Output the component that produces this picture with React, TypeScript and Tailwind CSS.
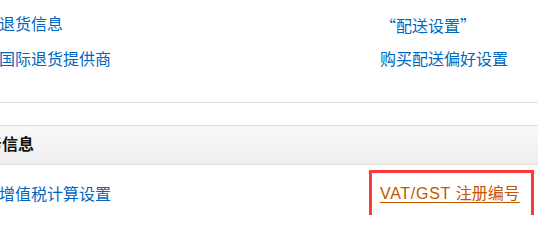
import React from 'react';

const linkCls = 'text-[#0066c0] hover:underline cursor-pointer';

export default function App() {
  return (
    <div className="w-[538px] h-[215px] overflow-hidden bg-white text-[16px] leading-[22px] font-['Liberation_Sans','Noto_Sans_CJK_SC',sans-serif]">
      {/* Return settings */}
      <div className="pt-[8px]">
        <div className="grid grid-cols-[380px_1fr] h-[34px] items-center">
          <span className={`${linkCls} -ml-[1px]`}>退货信息</span>
          <span className={`${linkCls} font-['Noto_Sans_CJK_SC',sans-serif]`}>“配送设置”</span>
        </div>
        <div className="grid grid-cols-[380px_1fr] h-[35px] items-center">
          <span className={`${linkCls} -ml-[1px]`}>国际退货提供商</span>
          <span className={linkCls}>购买配送偏好设置</span>
        </div>
      </div>
      <div className="mt-[25px] border-b border-[#dddddd]" />

      {/* Tax section header */}
      <div className="mt-[22px] h-[40px] border-y border-[#dcdcdc] bg-gradient-to-b from-[#f8f8f8] to-[#eeeeee] flex items-center overflow-hidden">
        <span className="-ml-[30px] font-bold text-[#111111] whitespace-nowrap">税务信息</span>
      </div>

      {/* Tax settings */}
      <div className="mt-[5px] grid grid-cols-[369px_165px]">
        <div className="flex items-center h-[50px]">
          <span className={`${linkCls} -ml-[1px]`}>增值税计算设置</span>
        </div>
        <div className="h-[60px] border-[3px] border-b-0 border-[#ff3a3a] pl-[8px] pt-[10px]">
          <span className="text-[#c45500] underline underline-offset-[3px] cursor-pointer whitespace-nowrap">
            <span className="tracking-[0.7px]">VAT/GST </span>注册编号
          </span>
        </div>
      </div>
    </div>
  );
}
